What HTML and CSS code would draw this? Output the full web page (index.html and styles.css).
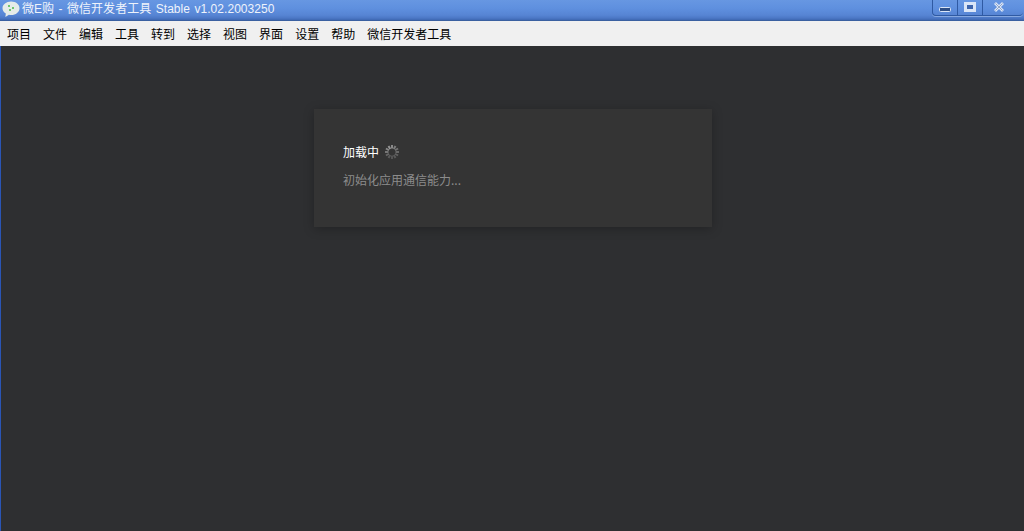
FILE: index.html
```html
<!DOCTYPE html>
<html lang="zh-CN">
<head>
<meta charset="utf-8">
<title>微E购 - 微信开发者工具</title>
<link rel="stylesheet" href="styles.css">
</head>
<body>
<div class="window">
  <header class="titlebar">
    <svg class="app-icon" width="18" height="17" viewBox="0 0 18 17">
      <path d="M9.200 .5C4.300 .5.500 3.500.500 7.200c0 2.200 1.300 4 3.300 5.200L3.400 16l3.500-2.300c.7.200 1.500.300 2.300.300 4.700 0 8.300-3 8.300-6.800S13.900.500 9.200.500z" fill="#e6ebe8"/>
      <rect x="6" y="4" width="2" height="2" fill="#6fc56f"/>
      <rect x="10" y="6" width="2" height="2" fill="#6fc56f"/>
      <rect x="7" y="8" width="2" height="2" fill="#6fc56f"/>
    </svg>
    <span class="title-text">微E购 - 微信开发者工具 Stable v1.02.2003250</span>
    <div class="win-controls">
      <button class="win-btn win-min"><svg width="12" height="5" viewBox="0 0 12 5"><rect x=".5" y=".5" width="11" height="4" rx="1" fill="#2f4f86" stroke="#dbe6f7"/></svg></button>
      <button class="win-btn win-max"><svg width="12" height="10" viewBox="0 0 12 10"><rect x="1" y="1" width="10" height="8" fill="#dbe6f7" stroke="#dbe6f7" stroke-width="2"/><rect x="3" y="3" width="6" height="4" fill="#3f66ad"/></svg></button>
      <button class="win-btn win-close"><svg width="12" height="10" viewBox="0 0 12 10"><path d="M2 1l8 8M10 1L2 9" fill="none" stroke="#dbe6f7" stroke-width="2.800"/><path d="M2.500 1.500l7 7M9.500 1.500l-7 7" fill="none" stroke="#5a78aa" stroke-width=".6"/></svg></button>
    </div>
  </header>
  <nav class="menubar">
    <span class="menu-item">项目</span>
    <span class="menu-item">文件</span>
    <span class="menu-item">编辑</span>
    <span class="menu-item">工具</span>
    <span class="menu-item">转到</span>
    <span class="menu-item">选择</span>
    <span class="menu-item">视图</span>
    <span class="menu-item">界面</span>
    <span class="menu-item">设置</span>
    <span class="menu-item">帮助</span>
    <span class="menu-item">微信开发者工具</span>
  </nav>
  <main class="content">
    <section class="card">
      <div class="loading-row">
        <span class="loading-text">加载中</span>
        <svg class="spinner" width="16" height="16" viewBox="0 0 16 16">
          <g stroke-width="2" stroke-linecap="butt">
            <line x1="8" y1="1" x2="8" y2="4.500" stroke="#8a8a8a"/>
            <line x1="11.500" y1="1.940" x2="9.750" y2="4.970" stroke="#7d7d7d"/>
            <line x1="14.060" y1="4.500" x2="11.030" y2="6.250" stroke="#727272"/>
            <line x1="15" y1="8" x2="11.500" y2="8" stroke="#686868"/>
            <line x1="14.060" y1="11.500" x2="11.030" y2="9.750" stroke="#606060"/>
            <line x1="11.500" y1="14.060" x2="9.750" y2="11.030" stroke="#5a5a5a"/>
            <line x1="8" y1="15" x2="8" y2="11.500" stroke="#555"/>
            <line x1="4.500" y1="14.060" x2="6.250" y2="11.030" stroke="#5a5a5a"/>
            <line x1="1.940" y1="11.500" x2="4.970" y2="9.750" stroke="#666"/>
            <line x1="1" y1="8" x2="4.500" y2="8" stroke="#767676"/>
            <line x1="1.940" y1="4.500" x2="4.970" y2="6.250" stroke="#888"/>
            <line x1="4.500" y1="1.940" x2="6.250" y2="4.970" stroke="#959595"/>
          </g>
        </svg>
      </div>
      <p class="status">初始化应用通信能力...</p>
    </section>
  </main>
</div>
</body>
</html>
```

FILE: styles.css
```css
* { box-sizing: border-box; }
html, body { margin: 0; height: 100%; overflow: hidden; }
body { font-family: "Noto Sans CJK SC", "Liberation Sans", sans-serif; font-size: 12px; }

.window { display: flex; flex-direction: column; height: 531px; width: 1024px; }

.titlebar {
  height: 21px;
  flex: none;
  display: flex;
  align-items: flex-start;
  padding-left: 2px;
  background: linear-gradient(#6797e2 0, #5f90df 8px, #5785d4 15px, #4c78c6 18px, #3f68b2 20px, #35588f 21px);
  color: #fff;
}
.app-icon { margin-top: 1px; flex: none; }
.title-text {
  margin-left: 2px;
  font-family: "Liberation Sans", "Noto Sans CJK SC", sans-serif;
  font-size: 12px;
  line-height: 18px;
  word-spacing: 1px;
  letter-spacing: .05px;
  white-space: nowrap;
  color: #eef3fb;
}
.win-controls {
  margin-left: auto;
  margin-right: 1px;
  display: flex;
  height: 16px;
  border: 1px solid #2f5aa3;
  border-top: 0;
  border-right: 0;
  border-radius: 0 0 4px 4px;
  box-shadow: 0 1px 0 #86a8e0;
}
.win-btn {
  padding: 0;
  margin: 0;
  border: 0;
  background: transparent;
  display: flex;
  justify-content: center;
  align-items: flex-start;
  border-right: 1px solid #2f5aa3;
}
.win-min { width: 25px; padding-top: 7px; }
.win-max { width: 25px; padding-top: 2px; }
.win-close { width: 40px; border-right: 0; padding-top: 2px; padding-right: 8px; }

.menubar {
  height: 25px;
  flex: none;
  display: flex;
  align-items: center;
  gap: 12px;
  padding-left: 7px;
  background: #f0f0f0;
  color: #000;
  font-size: 12px;
}
.menu-item { line-height: 16px; white-space: nowrap; }

.content {
  flex: 1;
  background: #2e2f31;
  border-left: 1px solid #2a55b5;
  display: flex;
  flex-direction: column;
  align-items: center;
  padding-top: 63px;
  padding-left: 1px;
}
.card {
  width: 398px;
  height: 118px;
  background: #343434;
  box-shadow: 0 2px 10px rgba(0, 0, 0, .25);
  padding: 33px 29px 0;
}
.loading-row { display: flex; align-items: center; gap: 5px; height: 20px; }
.loading-text { color: #fff; font-size: 12px; line-height: 20px; }
.spinner { display: block; flex: none; }
.status { margin: 8px 0 0; color: #8c8c8c; font-size: 12px; line-height: 20px; }
```
